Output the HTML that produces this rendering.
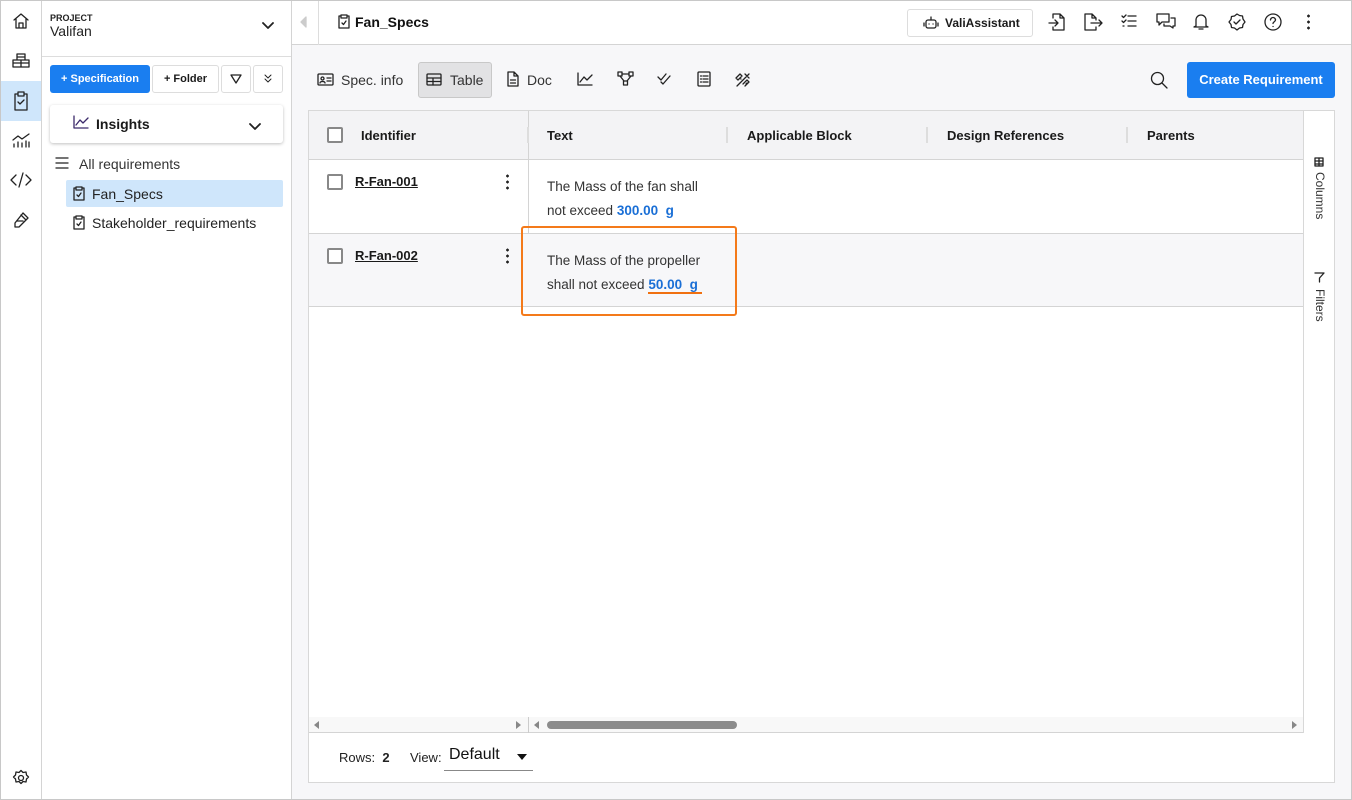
<!DOCTYPE html>
<html><head><meta charset="utf-8"><style>
*{box-sizing:border-box;margin:0;padding:0}
body{width:1352px;height:800px;overflow:hidden;font-family:"Liberation Sans",sans-serif;color:#1a1a1a;background:#f7f7f9;position:relative}
.a{position:absolute}
svg{fill:none;stroke:#222;stroke-width:1.3;stroke-linecap:round;stroke-linejoin:round}
.b{font-weight:bold}
</style></head><body>
<div class="a" style="left:0;top:0;width:1352px;height:800px;border:1px solid #c8c8c8;z-index:10;pointer-events:none"></div>
<!-- rail -->
<div class="a" style="left:0;top:0;width:42px;height:800px;background:#fff;border-right:1px solid #d4d4d4"></div>
<div class="a" style="left:1px;top:81px;width:40px;height:40px;background:#cfe6fb"></div>
<svg class="a" style="left:12px;top:12px" width="18" height="18" viewBox="0 0 18 18"><path d="M2 8L9 2l7 6M4 7v9h10V7M7 16v-5h4v5"/></svg>
<svg class="a" style="left:11px;top:52px" width="20" height="18" viewBox="0 0 20 18"><path d="M6 2h8v6H6zM2 8h8v7H2zM10 8h8v7h-8zM6 5h8M2 11h16"/></svg>
<svg class="a" style="left:13px;top:91px" width="16" height="20" viewBox="0 0 16 20"><path d="M5 3H2v16h12V3h-3M5 1h6v4H5zM5 11l2 2 4-4"/></svg>
<svg class="a" style="left:11px;top:131px" width="20" height="18" viewBox="0 0 20 18"><path d="M2 9l5-4 4 3 7-5M3 16v-3M7 16v-5M11 16v-4M15 16v-6M18 16v-5"/></svg>
<svg class="a" style="left:10px;top:172px" width="22" height="16" viewBox="0 0 22 16"><path d="M6 3L1 8l5 5M16 3l5 5-5 5M13 1L9 15"/></svg>
<svg class="a" style="left:12px;top:211px" width="18" height="18" viewBox="0 0 18 18"><path d="M11 2l5 5-9 9-4 0 0-4zM9 4l5 5M5 10h6"/></svg>
<svg class="a" style="left:12px;top:769px" width="18" height="18" viewBox="0 0 18 18"><circle cx="9" cy="9" r="2.5"/><path d="M9 1.5l2 2 3-.5.5 3 2 2-2 2-.5 3-3-.5-2 2-2-2-3 .5-.5-3-2-2 2-2 .5-3 3 .5z"/></svg>
<!-- sidebar -->
<div class="a" style="left:42px;top:0;width:250px;height:800px;background:#fff;border-right:1px solid #d4d4d4"></div>
<div class="a" style="left:42px;top:56px;width:249px;height:1px;background:#ddd"></div>
<div class="a" style="left:50px;top:13px;font-size:9px;font-weight:bold;color:#222">PROJECT</div>
<div class="a" style="left:50px;top:23px;font-size:14px;color:#222">Valifan</div>
<svg class="a" style="left:262px;top:22px" width="12" height="8" viewBox="0 0 12 8"><path d="M1 1l5 5 5-5" stroke-width="1.8"/></svg>
<div class="a b" style="left:50px;top:65px;width:100px;height:28px;background:#1a7ef0;border-radius:3px;color:#fff;font-size:11px;line-height:28px;text-align:center">+ Specification</div>
<div class="a b" style="left:152px;top:65px;width:67px;height:28px;border:1px solid #ddd;border-radius:3px;font-size:11px;line-height:26px;text-align:center">+ Folder</div>
<div class="a" style="left:221px;top:65px;width:30px;height:28px;border:1px solid #ddd;border-radius:3px"></div>
<svg class="a" style="left:230px;top:73px" width="12" height="12" viewBox="0 0 12 12"><path d="M1 2h10L6 10z"/></svg>
<div class="a" style="left:253px;top:65px;width:30px;height:28px;border:1px solid #ddd;border-radius:3px"></div>
<svg class="a" style="left:263px;top:73px" width="10" height="10" viewBox="0 0 10 10"><path d="M2 2l3 3 3-3M2 6l3 3 3-3" stroke-width="1"/></svg>
<div class="a" style="left:50px;top:105px;width:233px;height:38px;background:#fff;border-radius:3px;box-shadow:0 1px 3px rgba(0,0,0,.25)"></div>
<svg class="a" style="left:73px;top:115px" width="16" height="14" viewBox="0 0 16 14"><path d="M1 1v12h14M3 10l4-5 3 3 5-5" stroke="#3b2a6a"/></svg>
<div class="a b" style="left:96px;top:116px;font-size:14px">Insights</div>
<svg class="a" style="left:249px;top:123px" width="12" height="8" viewBox="0 0 12 8"><path d="M1 1l5 5 5-5" stroke-width="1.8"/></svg>
<svg class="a" style="left:55px;top:157px" width="14" height="12" viewBox="0 0 14 12"><path d="M1 1h12M1 6h12M1 11h12"/></svg>
<div class="a" style="left:79px;top:156px;font-size:14px;color:#333">All requirements</div>
<div class="a" style="left:66px;top:180px;width:217px;height:27px;background:#cfe6fb;border-radius:2px"></div>
<svg class="a" style="left:73px;top:186px" width="12" height="15" viewBox="0 0 12 15"><path d="M3 2H1v12h10V2H9M3 1h6v3H3zM4 9l1.5 1.5L8 7"/></svg>
<div class="a" style="left:92px;top:186px;font-size:14px;color:#222">Fan_Specs</div>
<svg class="a" style="left:73px;top:215px" width="12" height="15" viewBox="0 0 12 15"><path d="M3 2H1v12h10V2H9M3 1h6v3H3zM4 9l1.5 1.5L8 7"/></svg>
<div class="a" style="left:92px;top:215px;font-size:14px;color:#222">Stakeholder_requirements</div>
<!-- top bar -->
<div class="a" style="left:292px;top:0;width:1060px;height:45px;background:#fff;border-bottom:1px solid #d4d4d4"></div>
<div class="a" style="left:318px;top:0;width:1px;height:45px;background:#ddd"></div>
<svg class="a" style="left:298px;top:15px" width="10" height="14" viewBox="0 0 10 14"><path d="M8 2L3 7l5 5z" fill="#ccc" stroke="#ccc"/></svg>
<svg class="a" style="left:338px;top:14px" width="12" height="15" viewBox="0 0 12 15"><path d="M3 2H1v12h10V2H9M3 1h6v3H3zM4 9l1.5 1.5L8 7"/></svg>
<div class="a" style="left:355px;top:14px;font-size:14px;font-weight:bold;color:#111">Fan_Specs</div>
<div class="a b" style="left:907px;top:9px;width:126px;height:28px;border:1px solid #ddd;border-radius:3px;font-size:12px;line-height:26px;padding-left:37px">ValiAssistant</div>
<svg class="a" style="left:923px;top:16px" width="16" height="14" viewBox="0 0 16 14"><rect x="3" y="4" width="10" height="8" rx="2"/><path d="M8 1v3M1 7v3M15 7v3M6 8h.1M10 8h.1"/></svg>
<svg class="a" style="left:1048px;top:12px" width="18" height="20" viewBox="0 0 18 20"><path d="M5 6V2h7l4 4v12H5v-3M12 2v4h4M1 11h9M7 8l3 3-3 3"/></svg>
<svg class="a" style="left:1083px;top:12px" width="20" height="20" viewBox="0 0 20 20"><path d="M13 8V6L9 2H2v16h11v-3M9 2v4h4M8 11h11M16 8l3 3-3 3"/></svg>
<svg class="a" style="left:1121px;top:14px" width="16" height="14" viewBox="0 0 16 14"><path d="M1 2l1.5 1.5L5 1M1 7l1.5 1.5L5 6M7 2h8M7 7h8M7 12h8M2 12h1"/></svg>
<svg class="a" style="left:1156px;top:13px" width="20" height="16" viewBox="0 0 20 16"><path d="M1 1h12v8H6l-3 3V9H1zM15 5h4v8h-2v2l-3-2H8v-2"/></svg>
<svg class="a" style="left:1193px;top:12px" width="16" height="19" viewBox="0 0 16 19"><path d="M3 14V8a5 5 0 0110 0v6l2 1H1zM6 17h4"/></svg>
<svg class="a" style="left:1228px;top:13px" width="18" height="18" viewBox="0 0 18 18"><path d="M9 1l2.5 1.5 3 .5.5 3L17 9l-2 2.5-.5 3-3 .5L9 17l-2.5-2-3-.5-.5-3L1 9l2-2.5.5-3 3-.5z"/><path d="M6 9l2 2 4-4"/></svg>
<svg class="a" style="left:1264px;top:13px" width="18" height="18" viewBox="0 0 18 18"><circle cx="9" cy="9" r="8"/><path d="M6.5 7a2.5 2.5 0 115 0c0 1.5-2.5 2-2.5 3.5M9 13.5h.1"/></svg>
<div class="a" style="left:1307px;top:13px;width:3px;height:18px;background:radial-gradient(circle,#222 1.3px,transparent 1.5px) 0 0/3px 6px"></div>
<!-- tabs -->
<svg class="a" style="left:317px;top:73px" width="17" height="13" viewBox="0 0 17 13"><rect x="1" y="1" width="15" height="11" rx="1"/><circle cx="5.5" cy="5.5" r="1.5"/><path d="M3 10c0-2 5-2 5 0M10 5h4M10 8h4"/></svg>
<div class="a" style="left:341px;top:72px;font-size:14px;color:#333">Spec. info</div>
<div class="a" style="left:418px;top:62px;width:74px;height:36px;background:#e2e2e4;border:1px solid #c8c8c8;border-radius:3px"></div>
<svg class="a" style="left:426px;top:73px" width="16" height="13" viewBox="0 0 16 13"><rect x="1" y="1" width="14" height="11" rx="1"/><path d="M1 5h14M1 8.5h14M7 5v7"/></svg>
<div class="a" style="left:450px;top:72px;font-size:14px;color:#333">Table</div>
<svg class="a" style="left:507px;top:71px" width="12" height="16" viewBox="0 0 12 16"><path d="M1 1h6l4 4v10H1zM7 1v4h4M3.5 9h5M3.5 12h5"/></svg>
<div class="a" style="left:527px;top:72px;font-size:14px;color:#333">Doc</div>
<svg class="a" style="left:577px;top:72px" width="16" height="14" viewBox="0 0 16 14"><path d="M1 1v12h14M3 10l4-5 3 3 5-5"/></svg>
<svg class="a" style="left:617px;top:71px" width="17" height="16" viewBox="0 0 17 16"><rect x="1" y="1" width="4" height="4"/><rect x="12" y="1" width="4" height="4"/><rect x="6.5" y="10" width="4" height="4"/><path d="M5 3h7M3 5l4 5M14 5l-4 5"/></svg>
<svg class="a" style="left:657px;top:73px" width="14" height="12" viewBox="0 0 14 12"><path d="M1 4l3 3 5-6M4 9l2 2 7-8"/></svg>
<svg class="a" style="left:697px;top:71px" width="14" height="16" viewBox="0 0 14 16"><rect x="1" y="1" width="12" height="14" rx="1"/><path d="M3.5 5h1M6 5h5M3.5 8h1M6 8h5M3.5 11h1M6 11h5"/></svg>
<svg class="a" style="left:735px;top:72px" width="16" height="16" viewBox="0 0 16 16"><path d="M2 14L14 2M10 2l4 4M1 6l4-4 2 2-4 4zM10 14l4-4-2-2-4 4M5 6l1 1M11 12l1-1"/></svg>
<svg class="a" style="left:1150px;top:71px" width="18" height="18" viewBox="0 0 18 18"><circle cx="7.5" cy="7.5" r="6"/><path d="M12 12l5 5"/></svg>
<div class="a b" style="left:1187px;top:62px;width:148px;height:36px;background:#1a7ef0;border-radius:3px;color:#fff;font-size:13px;line-height:36px;text-align:center">Create Requirement</div>
<!-- table panel -->
<div class="a" style="left:308px;top:110px;width:1027px;height:673px;background:#fff;border:1px solid #d8d8d8"></div>
<div class="a" style="left:309px;top:111px;width:994px;height:49px;background:#f3f3f5;border-bottom:1px solid #d4d4d4"></div>
<div class="a" style="left:1303px;top:111px;width:1px;height:622px;background:#d8d8d8"></div>
<div class="a" style="left:528px;top:111px;width:1px;height:196px;background:#d4d4d4"></div>
<div class="a" style="left:527px;top:127px;width:2px;height:16px;background:#ddd"></div>
<div class="a" style="left:726px;top:127px;width:2px;height:16px;background:#ddd"></div>
<div class="a" style="left:926px;top:127px;width:2px;height:16px;background:#ddd"></div>
<div class="a" style="left:1126px;top:127px;width:2px;height:16px;background:#ddd"></div>
<div class="a" style="left:327px;top:127px;width:16px;height:16px;border:2px solid #888;border-radius:2px;background:#fff"></div>
<div class="a b" style="left:361px;top:128px;font-size:13px">Identifier</div>
<div class="a b" style="left:547px;top:128px;font-size:13px">Text</div>
<div class="a b" style="left:747px;top:128px;font-size:13px">Applicable Block</div>
<div class="a b" style="left:947px;top:128px;font-size:13px">Design References</div>
<div class="a b" style="left:1147px;top:128px;font-size:13px">Parents</div>
<!-- row1 -->
<div class="a" style="left:309px;top:233px;width:994px;height:74px;background:#f7f7f9;border-top:1px solid #d4d4d4;border-bottom:1px solid #d4d4d4"></div>
<div class="a" style="left:327px;top:174px;width:16px;height:16px;border:2px solid #888;border-radius:2px;background:#fff"></div>
<div class="a b" style="left:355px;top:174px;font-size:13px;text-decoration:underline">R-Fan-001</div>
<div class="a" style="left:506px;top:173px;width:3px;height:18px;background:radial-gradient(circle,#222 1.3px,transparent 1.5px) 0 0/3px 6px"></div>
<div class="a" style="left:547px;top:175px;font-size:13.5px;line-height:24px;color:#333">The Mass of the fan shall<br>not exceed <span class="b" style="color:#1a6fd6">300.00&nbsp; g</span></div>
<div class="a" style="left:327px;top:248px;width:16px;height:16px;border:2px solid #888;border-radius:2px;background:#fff"></div>
<div class="a b" style="left:355px;top:248px;font-size:13px;text-decoration:underline">R-Fan-002</div>
<div class="a" style="left:506px;top:247px;width:3px;height:18px;background:radial-gradient(circle,#222 1.3px,transparent 1.5px) 0 0/3px 6px"></div>
<div class="a" style="left:547px;top:249px;font-size:13.5px;line-height:24px;color:#333">The Mass of the propeller<br>shall not exceed <span class="b" style="color:#1a6fd6">50.00&nbsp; g</span></div>
<div class="a" style="left:648px;top:292px;width:54px;height:2px;background:#f07010"></div>
<div class="a" style="left:521px;top:226px;width:216px;height:90px;border:2px solid #f47a1a;border-radius:3px"></div>
<!-- side panel -->
<svg class="a" style="left:1314px;top:157px" width="10" height="10" viewBox="0 0 10 10"><rect x="1" y="1" width="8" height="8"/><path d="M1 4h8M1 7h8M5 1v8"/></svg>
<div class="a" style="left:1313px;top:172px;font-size:12px;color:#333;writing-mode:vertical-rl">Columns</div>
<svg class="a" style="left:1314px;top:272px" width="11" height="11" viewBox="0 0 11 11"><path d="M1 1h9L5.5 6v4M5.5 6"/></svg>
<div class="a" style="left:1313px;top:289px;font-size:12px;color:#333;writing-mode:vertical-rl">Filters</div>
<!-- scrollbar -->
<div class="a" style="left:309px;top:717px;width:994px;height:16px;background:#f8f8f8;border-bottom:1px solid #d4d4d4"></div>
<div class="a" style="left:528px;top:717px;width:1px;height:16px;background:#ccc"></div>
<div class="a" style="left:314px;top:721px;width:0;height:0;border:4px solid transparent;border-right:5px solid #888;border-left:0"></div>
<div class="a" style="left:516px;top:721px;width:0;height:0;border:4px solid transparent;border-left:5px solid #888;border-right:0"></div>
<div class="a" style="left:534px;top:721px;width:0;height:0;border:4px solid transparent;border-right:5px solid #888;border-left:0"></div>
<div class="a" style="left:1292px;top:721px;width:0;height:0;border:4px solid transparent;border-left:5px solid #888;border-right:0"></div>
<div class="a" style="left:547px;top:721px;width:190px;height:8px;background:#8c8c8c;border-radius:4px"></div>
<!-- footer -->
<div class="a" style="left:339px;top:750px;font-size:13px;color:#222">Rows: <b>&nbsp;2</b></div>
<div class="a" style="left:410px;top:750px;font-size:13px;color:#222">View:</div>
<div class="a" style="left:449px;top:746px;font-size:16px;color:#111">Default</div>
<div class="a" style="left:517px;top:754px;width:0;height:0;border:5px solid transparent;border-top:6px solid #111;border-bottom:0"></div>
<div class="a" style="left:444px;top:770px;width:89px;height:1px;background:#888"></div>
</body></html>
